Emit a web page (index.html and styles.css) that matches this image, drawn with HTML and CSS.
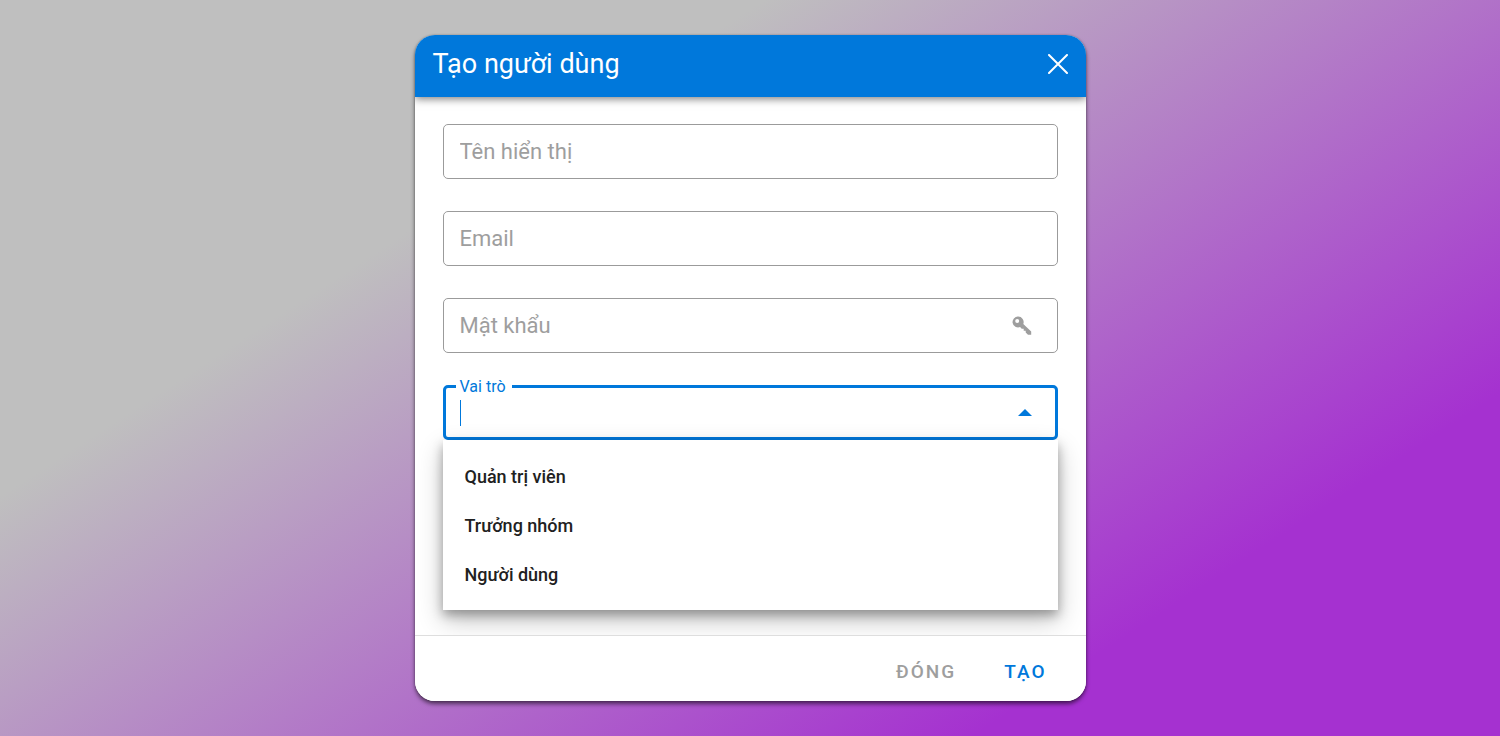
FILE: index.html
```html
<!DOCTYPE html>
<html lang="vi">
<head>
  <meta charset="utf-8">
  <meta name="viewport" content="width=device-width, initial-scale=1">
  <title>Tạo người dùng</title>
  <link rel="stylesheet" href="styles.css">
</head>
<body class="page">
  <form class="dialog" role="dialog" aria-labelledby="dialog-title">
    <header class="dialog-header">
      <h1 class="dialog-title" id="dialog-title">Tạo người dùng</h1>
      <button class="close-button" type="button" aria-label="Hủy">
        <svg class="close-icon" viewBox="0 0 20 20" aria-hidden="true"><path d="M1 1 19 19M19 1 1 19"/></svg>
      </button>
    </header>
    <div class="dialog-body">
      <div class="field">
        <input class="field-input" type="text" placeholder="Tên hiển thị" aria-label="Tên hiển thị">
      </div>
      <div class="field">
        <input class="field-input" type="email" placeholder="Email" aria-label="Email">
      </div>
      <div class="field">
        <input class="field-input" type="password" placeholder="Mật khẩu" aria-label="Mật khẩu">
        <svg class="key-icon" viewBox="0 0 20 20" aria-hidden="true">
          <path fill-rule="evenodd" d="M6.2.5a5.5 5.5 0 1 0 1.9 10.6l1.6 1.6h2v2h2v1.9l2.3 2.2h3.2v-3.2l-7.9-7.7A5.5 5.5 0 0 0 6.2.5ZM5.2 3a2 2 0 1 1 0 4 2 2 0 0 1 0-4Z"/>
        </svg>
      </div>
      <div class="select">
        <div class="field field-active">
          <label class="field-label" for="role">Vai trò</label>
          <span class="caret"></span>
          <input class="field-input" id="role" type="text" role="combobox" aria-expanded="true" aria-controls="role-menu">
          <svg class="arrow-icon" viewBox="0 0 14 7" aria-hidden="true"><path d="M0 7 7 0l7 7Z"/></svg>
        </div>
        <ul class="menu" id="role-menu" role="listbox" aria-label="Vai trò">
          <li class="menu-item" role="option">Quản trị viên</li>
          <li class="menu-item" role="option">Trưởng nhóm</li>
          <li class="menu-item" role="option">Người dùng</li>
        </ul>
      </div>
    </div>
    <footer class="dialog-footer">
      <button class="action" type="button">Đóng</button>
      <button class="action action-primary" type="submit">Tạo</button>
    </footer>
  </form>
</body>
</html>
```
FILE: styles.css
```css
* {
  box-sizing: border-box;
}

.page {
  display: flex;
  justify-content: center;
  align-items: center;
  min-height: 100vh;
  margin: 0;
  padding: 24px 16px;
  background: linear-gradient(147deg, #bfbfbf 29%, #a531d0 80%);
  font-family: Roboto, "Noto Sans", sans-serif;
}

.dialog {
  width: 100%;
  max-width: 671px;
  overflow: hidden;
  border-radius: 20px;
  background: #fff;
  box-shadow: 0 3px 4px rgba(0, 0, 0, 0.55), 0 0 2px rgba(0, 0, 0, 0.3);
}

.dialog-header {
  position: relative;
  display: flex;
  justify-content: space-between;
  align-items: center;
  padding: 12px 18px 16px;
  background: #0078db;
  color: #fff;
  box-shadow: 0 2px 8px rgba(0, 0, 0, 0.5);
}

.dialog-title {
  margin: 0;
  font-size: 27px;
  font-weight: 400;
  line-height: 34px;
}

.close-button {
  display: flex;
  padding: 0;
  border: 0;
  background: none;
  color: inherit;
}

.close-icon {
  width: 20px;
  height: 20px;
  fill: none;
  stroke: currentColor;
  stroke-width: 2;
  stroke-linecap: round;
}

.dialog-body {
  display: flex;
  flex-direction: column;
  gap: 32px;
  padding: 27px 28px 25px;
}

.field {
  position: relative;
  display: flex;
  align-items: center;
  height: 55px;
  padding: 0 25px 0 16px;
  border: 1px solid #9b9b9b;
  border-radius: 5px;
  color: #9e9e9e;
}

.field-active {
  padding: 0 23px 0 14px;
  border: 3px solid #0078db;
  color: #0078db;
}

.field-input {
  flex: 1;
  min-width: 0;
  padding: 0;
  border: 0;
  outline: 0;
  background: none;
  color: #212121;
  font-family: inherit;
  font-size: 22px;
  line-height: 28px;
}

.field-input::placeholder {
  color: #9e9e9e;
  opacity: 1;
}

.field-label {
  position: absolute;
  top: -11px;
  left: 10px;
  padding: 0 6px 0 4px;
  background: #fff;
  font-size: 16px;
  line-height: 20px;
}

.caret {
  width: 1px;
  height: 26px;
  background: currentColor;
}

.key-icon {
  width: 20px;
  height: 20px;
  fill: currentColor;
}

.arrow-icon {
  width: 14px;
  height: 7px;
  fill: currentColor;
}

.menu {
  position: relative;
  margin: 0;
  padding: 12px 0 11px;
  background: #fff;
  box-shadow: 0 5px 10px rgba(0, 0, 0, 0.3), 0 10px 24px rgba(0, 0, 0, 0.24);
  list-style: none;
}

.menu-item {
  padding: 0 22px;
  color: #212121;
  font-size: 18px;
  font-weight: 500;
  line-height: 49px;
}

.dialog-footer {
  position: relative;
  display: flex;
  justify-content: flex-end;
  gap: 48px;
  padding: 22px 39px 15px;
  border-top: 1px solid #dedede;
  background: #fff;
}

.action {
  padding: 0;
  border: 0;
  background: none;
  color: #9e9e9e;
  font-family: inherit;
  font-size: 19px;
  font-weight: 500;
  letter-spacing: 2px;
  line-height: 28px;
  text-transform: uppercase;
}

.action-primary {
  color: #0078db;
}
```
